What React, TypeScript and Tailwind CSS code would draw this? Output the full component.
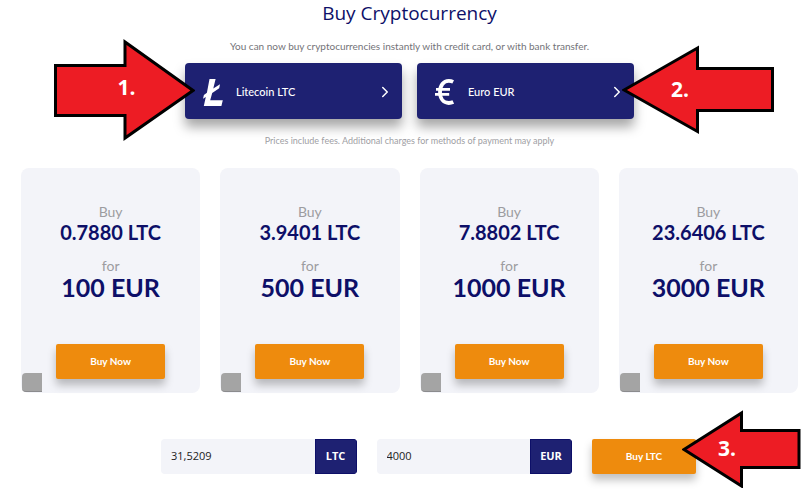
import { useState } from "react";
import { ChevronRight } from "lucide-react";

const offers = [
  { ltc: "0.7880", eur: "100" },
  { ltc: "3.9401", eur: "500" },
  { ltc: "7.8802", eur: "1000" },
  { ltc: "23.6406", eur: "3000" },
];

function LitecoinIcon() {
  return (
    <svg width="20" height="27" viewBox="0 0 20 27" fill="#fff" aria-hidden="true">
      <path d="M6.5 0H12.6L10.3 9.4L17 5.2L16.2 9.3L9.2 13.9L7.2 21.3H19.8L18.4 27H0.8L2.8 18L0 19.8L0.9 15.9L3.9 13.8Z" />
    </svg>
  );
}

function EuroIcon() {
  return (
    <svg width="19" height="26" viewBox="0 0 19 26" fill="none" stroke="#fff" aria-hidden="true">
      <path d="M18.2 2.9C16.8 2.2 15.3 1.9 13.8 1.9C8.4 1.9 5 6.5 5 13C5 19.5 8.4 24 13.8 24C15.4 24 16.9 23.7 18.3 23" strokeWidth="3.8" />
      <path d="M1 10.3H15M0 15.3H14.2" strokeWidth="2.8" />
    </svg>
  );
}

function CurrencyButton({ icon, label }: { icon: React.ReactNode; label: string }) {
  return (
    <button
      type="button"
      className="flex h-14 w-full items-center rounded bg-[#1e2172] pt-0.5 pr-2 pl-[18px] font-['Lato',sans-serif] text-[11px] text-white shadow-[0_8px_12px_rgba(0,0,0,0.35)]"
    >
      <span className="flex w-[33px] shrink-0">{icon}</span>
      <span className="flex-1 text-left font-medium">{label}</span>
      <ChevronRight size={18} strokeWidth={2} />
    </button>
  );
}

function OfferCard({ ltc, eur }: { ltc: string; eur: string }) {
  return (
    <div className="relative flex flex-col items-center rounded-lg bg-[#f3f4f9] pt-[34px] pb-[14px] font-['Lato',sans-serif]">
      <p className="text-sm leading-5 text-[#9c9ca0]">Buy</p>
      <p className="text-[20px] leading-5 font-bold text-[#0d0f68]">{ltc} LTC</p>
      <p className="mt-[14px] text-sm leading-5 text-[#9c9ca0]">for</p>
      <p className="text-[25px] leading-[22px] font-bold text-[#0d0f68]">{eur} EUR</p>
      <button
        type="button"
        className="mt-[46px] h-[35px] w-[109px] rounded-xs bg-[#ee8b0d] text-[10px] font-bold text-white shadow-[0_6px_8px_rgba(0,0,0,0.25)]"
      >
        Buy Now
      </button>
      <span className="absolute bottom-px left-px h-[19px] w-5 rounded-l-sm border-b border-[#8b8b8d] bg-[#a4a4a4]" />
    </div>
  );
}

type AmountFieldProps = {
  id: string;
  unit: string;
  value: string;
  onChange: (value: string) => void;
};

function AmountField({ id, unit, value, onChange }: AmountFieldProps) {
  return (
    <div className="flex h-[35px] min-w-0 flex-1 overflow-hidden rounded">
      <input
        id={id}
        value={value}
        onChange={(e) => onChange(e.target.value)}
        className="min-w-0 flex-1 bg-[#f3f4f9] px-[10px] text-[11px] text-[#222] outline-none"
      />
      <label
        htmlFor={id}
        className="flex w-[42px] items-center justify-center border border-[#0d0f68] bg-[#1e2172] text-[11px] font-bold text-white"
      >
        {unit}
      </label>
    </div>
  );
}

export default function App() {
  const [ltc, setLtc] = useState("31,5209");
  const [eur, setEur] = useState("4000");

  return (
    <main className="bg-white pr-[11px] pl-[21px] font-['Open_Sans',sans-serif]">
      <header className="text-center">
        <h1 className="text-[19px] leading-[26px] text-[#0d0f68]">Buy Cryptocurrency</h1>
        <p className="mt-[10px] font-['Lato',sans-serif] text-[10px] leading-5 text-[#737378]">
          You can now buy cryptocurrencies instantly with credit card, or with bank transfer.
        </p>
      </header>

      {/* CURRENCY PICKERS */}
      <div className="mx-auto mt-[7px] grid max-w-[449px] grid-cols-2 gap-[15px]">
        <div className="relative">
          <CurrencyButton icon={<LitecoinIcon />} label="Litecoin LTC" />
          <div className="absolute top-[-24px] right-[207px]">
            <svg width="143" height="102" viewBox="0 0 143 102" fill="#ed1c24" stroke="#000" strokeWidth="3">
              <path d="M3.5 26.5H73V3L141 51.5L73 99V76.5H3.5Z" />
            </svg>
            <span className="absolute inset-0 flex items-center justify-center pb-1 pl-[6px] text-[21px] font-bold text-white">1.</span>
          </div>
        </div>
        <div className="relative">
          <CurrencyButton icon={<EuroIcon />} label="Euro EUR" />
          <div className="absolute top-[-18px] left-[205px]">
            <svg width="154" height="90" viewBox="0 0 154 90" fill="#ed1c24" stroke="#000" strokeWidth="3">
              <path d="M150.5 23.5V65.5H75.5V86.5L2 45L75.5 3V23.5Z" />
            </svg>
            <span className="absolute inset-0 flex items-center pl-[49px] text-[21px] font-bold text-white">2.</span>
          </div>
        </div>
      </div>
      <p className="mt-3 text-center font-['Lato',sans-serif] text-[9px] leading-5 text-[#a0a0a4]">
        Prices include fees. Additional charges for methods of payment may apply
      </p>

      {/* OFFERS */}
      <section className="mt-[17px] grid grid-cols-4 gap-5">
        {offers.map((offer) => (
          <OfferCard key={offer.eur} ltc={offer.ltc} eur={offer.eur} />
        ))}
      </section>

      {/* CUSTOM AMOUNT */}
      <form
        className="mx-auto mt-[46px] flex max-w-[573px] gap-5 pb-4 pl-[38px]"
        onSubmit={(e) => e.preventDefault()}
      >
        <AmountField id="amount-ltc" unit="LTC" value={ltc} onChange={setLtc} />
        <AmountField id="amount-eur" unit="EUR" value={eur} onChange={setEur} />
        <div className="relative w-[104px]">
          <button
            type="submit"
            className="h-[35px] w-full rounded-xs bg-[#ee8b0d] font-['Lato',sans-serif] text-[10px] font-bold text-white shadow-[0_6px_8px_rgba(0,0,0,0.25)]"
          >
            Buy LTC
          </button>
          <div className="absolute top-[-29px] left-[90px]">
            <svg width="120" height="78" viewBox="0 0 120 78" fill="#ed1c24" stroke="#000" strokeWidth="3">
              <path d="M117 20.5V57.5H59.5V76L2 39.5L59.5 3V20.5Z" />
            </svg>
            <span className="absolute inset-0 flex items-center pl-9 text-[21px] font-bold text-white">3.</span>
          </div>
        </div>
      </form>
    </main>
  );
}
